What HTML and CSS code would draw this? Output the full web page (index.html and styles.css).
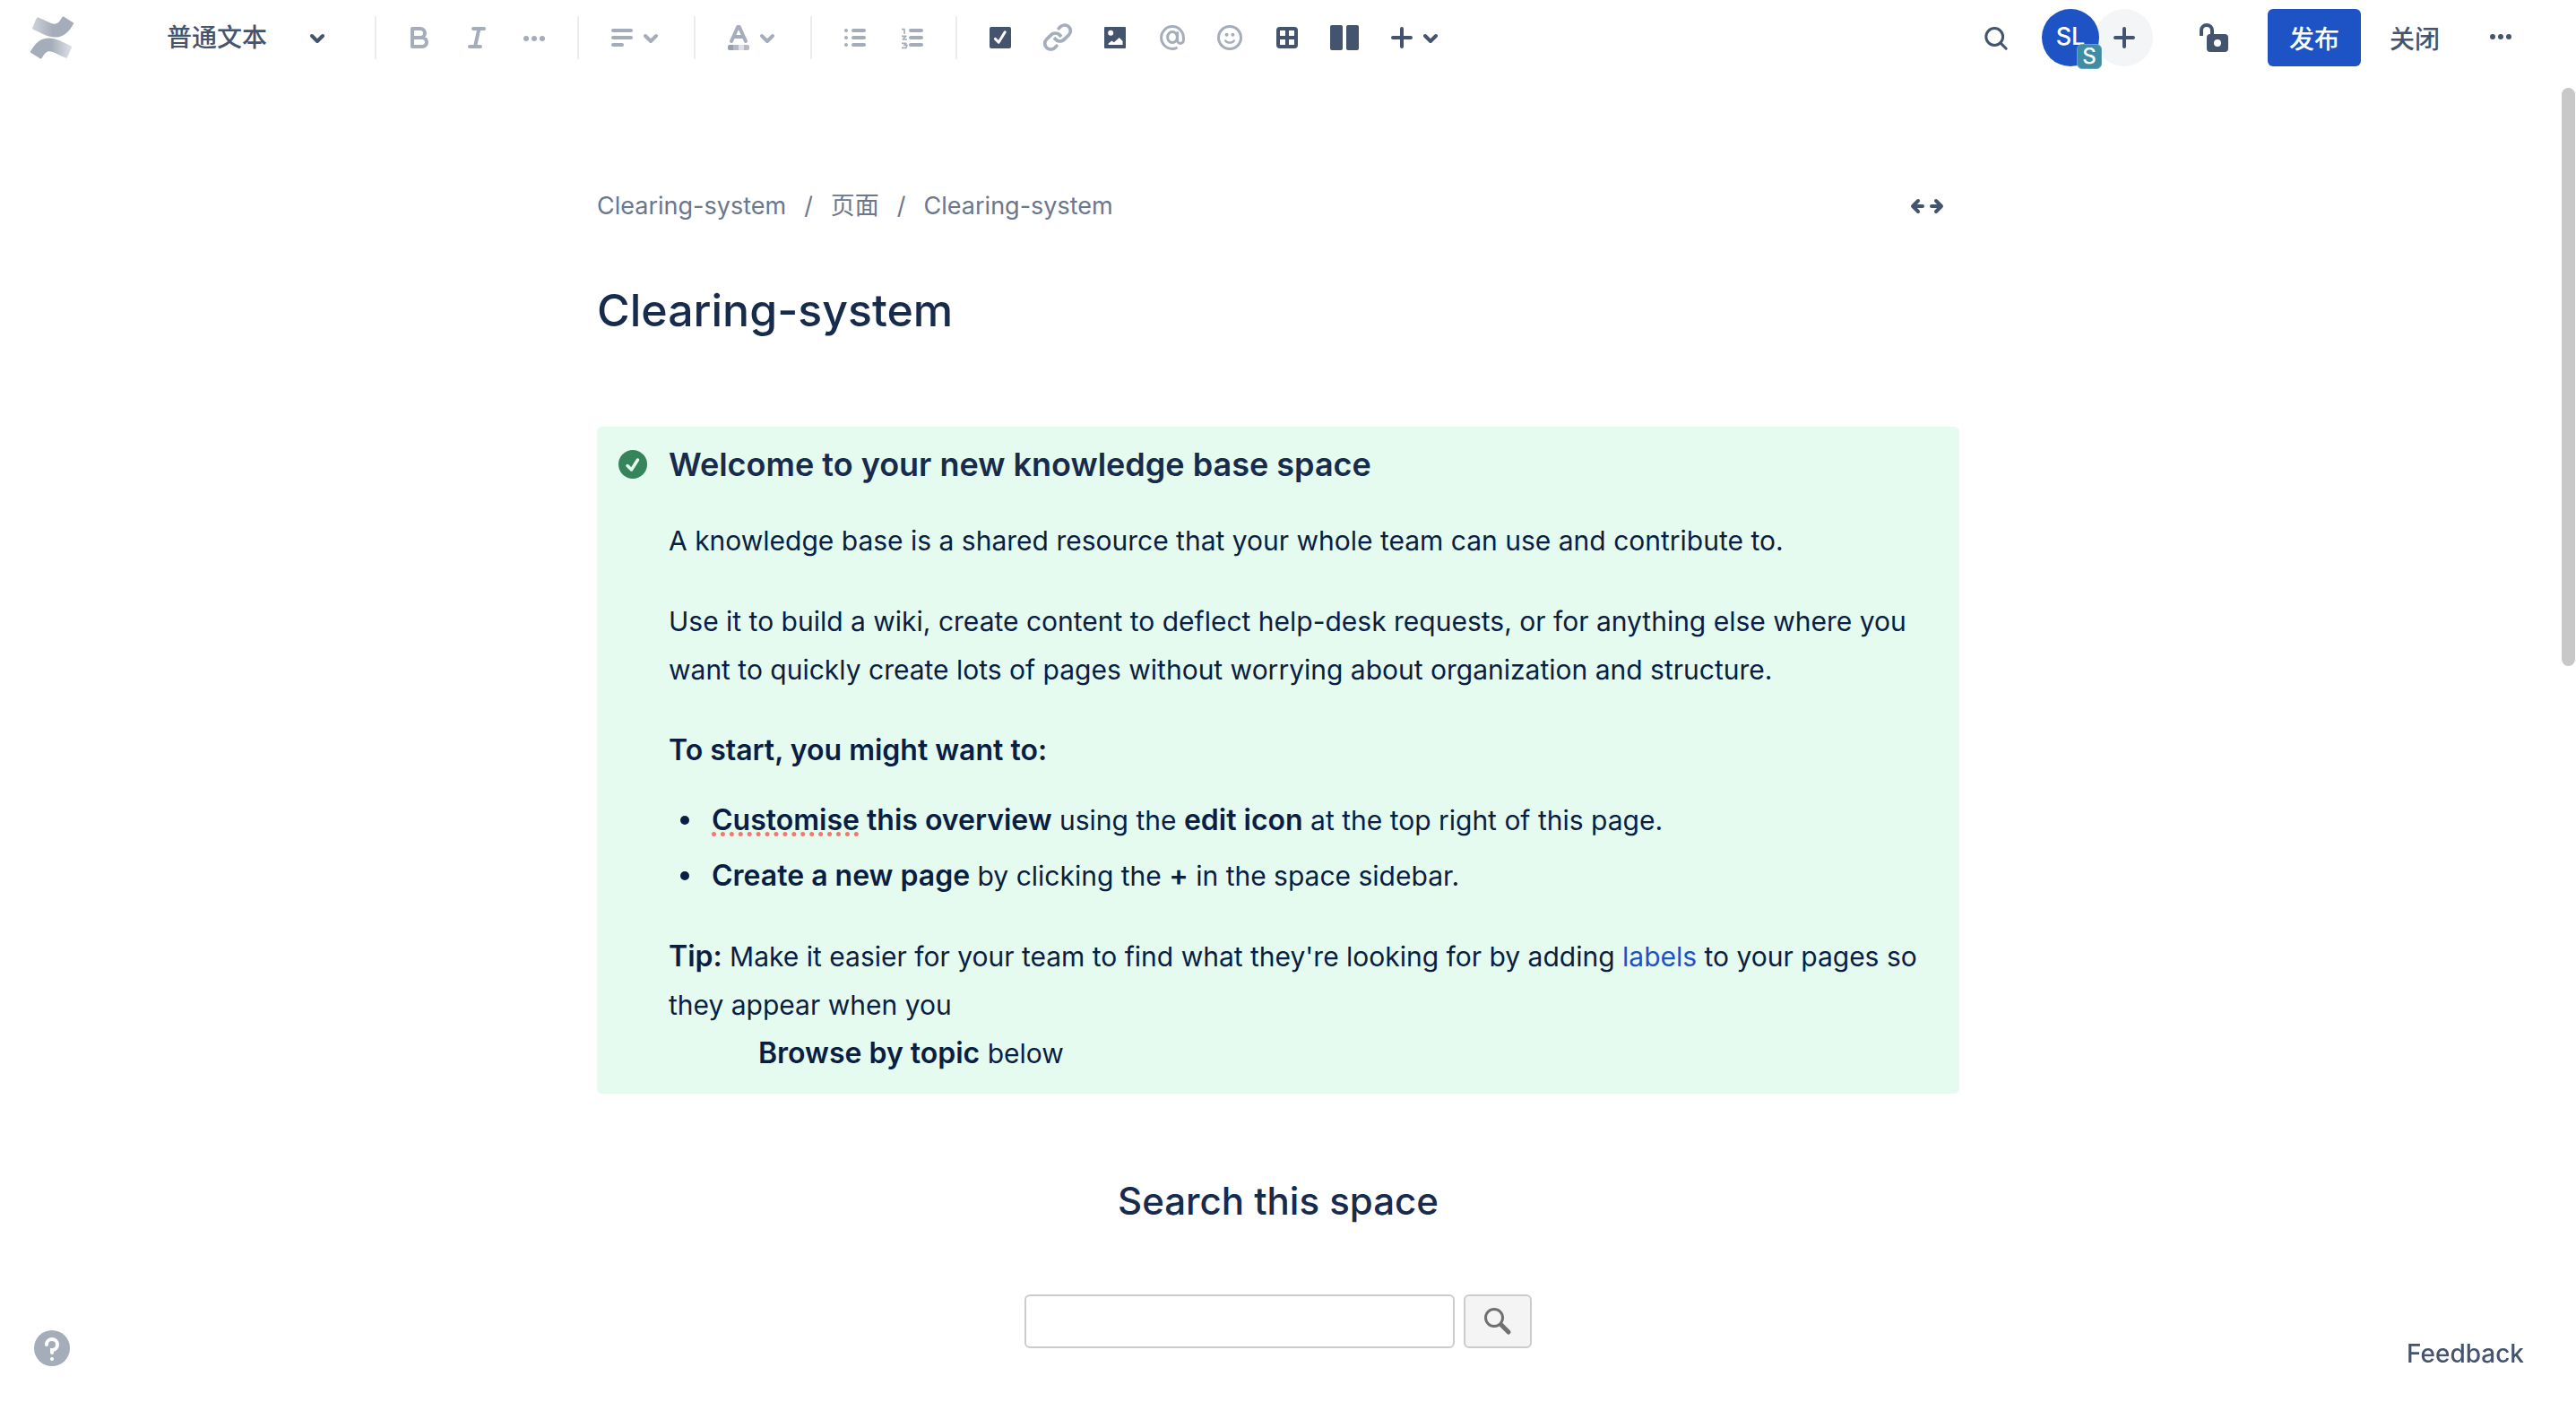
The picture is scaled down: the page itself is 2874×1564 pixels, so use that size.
FILE: index.html
```html
<!DOCTYPE html>
<html lang="zh">
<head>
<meta charset="utf-8">
<title>Clearing-system</title>
<link rel="stylesheet" href="styles.css">
</head>
<body>
<header class="toolbar">
  <a class="logo" href="#" aria-label="Confluence">
    <svg viewBox="0 0 24 24" width="48" height="48">
      <defs>
        <linearGradient id="g1" x1="0" y1="0" x2="1" y2="0"><stop offset=".5" stop-color="#a5adba"/><stop offset="1" stop-color="#dfe2e7"/></linearGradient>
        <linearGradient id="g2" x1="0" y1="0" x2="1" y2="0"><stop offset="0" stop-color="#cfd3da"/><stop offset=".5" stop-color="#a5adba"/></linearGradient>
      </defs>
      <path fill="url(#g1)" d="M.87 18.257c-.248.382-.53.875-.763 1.245a.764.764 0 0 0 .255 1.04l4.965 3.054a.764.764 0 0 0 1.058-.26c.199-.332.454-.763.733-1.221 1.967-3.247 3.945-2.853 7.508-1.146l4.957 2.337a.764.764 0 0 0 1.028-.382l2.364-5.346a.764.764 0 0 0-.382-1 599.851 599.851 0 0 1-4.965-2.361C10.911 10.97 5.224 11.185.87 18.257z"/>
      <path fill="url(#g2)" d="M23.131 5.743c.249-.405.531-.875.764-1.25a.764.764 0 0 0-.256-1.034L18.675.404a.764.764 0 0 0-1.058.26c-.195.335-.451.763-.734 1.225-1.966 3.246-3.945 2.85-7.508 1.146L4.437.694a.764.764 0 0 0-1.027.382L1.046 6.422a.764.764 0 0 0 .382 1c1.039.49 3.105 1.467 4.965 2.361 6.698 3.246 12.392 3.029 16.738-4.04z"/>
    </svg>
  </a>
  <div class="style-picker">
    <select aria-label="文本样式"><option>普通文本</option></select>
    <svg class="chevron" viewBox="8 0 8 24"><path class="line" d="M9 11l3 3 3-3"/></svg>
  </div>
  <div class="group muted">
    <button class="tool" aria-label="粗体"><svg class="icon" viewBox="0 0 24 24"><path class="line" d="M8 7h4.500a2.500 2.500 0 010 5H8zM8 12h5.500a2.500 2.500 0 010 5H8z"/></svg></button>
    <button class="tool" aria-label="斜体"><svg class="icon" viewBox="0 0 24 24"><path class="line" d="M10 7h6M8 17h6M13.200 7l-2.200 10"/></svg></button>
    <button class="tool" aria-label="更多格式"><svg class="icon" viewBox="0 0 24 24"><circle cx="7.500" cy="12.500" r="1.500"/><circle cx="12" cy="12.500" r="1.500"/><circle cx="16.500" cy="12.500" r="1.500"/></svg></button>
  </div>
  <div class="group muted">
    <button class="tool split" aria-label="对齐"><svg class="icon" viewBox="0 0 24 24"><path class="line" d="M7 8h10M7 12h10M7 16h5"/></svg><svg class="chevron" viewBox="8 0 8 24"><path class="line" d="M9 11l3 3 3-3"/></svg></button>
  </div>
  <div class="group muted">
    <button class="tool split" aria-label="文本颜色"><svg class="icon" viewBox="0 0 24 24"><path class="line" d="M8 14l3.600-8h.8l3.600 8M9.400 11.500h5.200"/><path fill="#97a0af" d="M7 16h2v3H7a1 1 0 01-1-1v-1a1 1 0 011-1z"/><path fill="#b3bac5" d="M9 16h3v3H9z"/><path fill="#dfe1e6" d="M12 16h3v3h-3z"/><path fill="#b3bac5" d="M15 16h2a1 1 0 011 1v1a1 1 0 01-1 1h-2z"/></svg><svg class="chevron" viewBox="8 0 8 24"><path class="line" d="M9 11l3 3 3-3"/></svg></button>
  </div>
  <div class="group muted">
    <button class="tool" aria-label="项目符号列表"><svg class="icon" viewBox="0 0 24 24"><circle cx="7" cy="8" r="1"/><circle cx="7" cy="12" r="1"/><circle cx="7" cy="16" r="1"/><path class="line" d="M11 8h6M11 12h6M11 16h6"/></svg></button>
    <button class="tool" aria-label="编号列表"><svg class="icon" viewBox="0 0 24 24"><path class="line" d="M11 8h6M11 12h6M11 16h6"/><path class="hair" d="M6 7.300h1.500V10M6 11.200h2.400L6.600 13H9M6 15.200h2.500l-1 1H9l-.500 1.500H6"/></svg></button>
  </div>
  <div class="group strong">
    <button class="tool" aria-label="操作项"><svg class="icon" viewBox="0 0 24 24"><rect x="6" y="6" width="12" height="12" rx="1"/><path class="cut" d="M9.200 12.700l1.900 1.900 3.500-5.700"/></svg></button>
    <button class="tool muted" aria-label="链接"><svg class="icon" viewBox="0 0 24 24"><g transform="translate(1.200 .5) scale(.9)"><path d="M12.856 5.457l-.937.92a1.002 1.002 0 000 1.437 1.047 1.047 0 001.463 0l.984-.966c.967-.95 2.542-1.135 3.602-.288a2.540 2.540 0 01.203 3.810l-2.903 2.852a2.646 2.646 0 01-3.696 0l-1.110-1.090L9 13.570l1.108 1.089c1.822 1.788 4.802 1.788 6.622 0l2.905-2.852a4.558 4.558 0 00-.357-6.820c-1.893-1.517-4.695-1.226-6.422.470"/><path d="M11.144 19.543l.937-.92a1.002 1.002 0 000-1.437 1.047 1.047 0 00-1.462 0l-.985.966c-.967.950-2.542 1.135-3.602.288a2.540 2.540 0 01-.203-3.810l2.903-2.852a2.646 2.646 0 013.696 0l1.110 1.090L15 11.430l-1.108-1.089c-1.822-1.788-4.802-1.788-6.622 0l-2.905 2.852a4.558 4.558 0 00.357 6.820c1.893 1.517 4.695 1.226 6.422-.470"/></g></svg></button>
    <button class="tool" aria-label="图片"><svg class="icon" viewBox="0 0 24 24"><rect x="6" y="6" width="12" height="12" rx=".5"/><circle cx="9.600" cy="9.400" r="1.500" fill="#fff"/><path fill="#fff" d="M8.300 16v-.8l1.900-1.400 1.200.8 3-2.600 1.900 2V16z"/></svg></button>
    <button class="tool muted" aria-label="提及"><svg class="icon" viewBox="0 0 24 24"><path class="thin" d="M14.800 9.200v4.300a1.700 1.700 0 003.400 0V12a6.200 6.200 0 10-6.200 6.200c.900 0 1.500-.1 2.200-.4"/><ellipse class="thin" cx="12" cy="11.800" rx="2.700" ry="3"/></svg></button>
    <button class="tool muted" aria-label="表情"><svg class="icon" viewBox="0 0 24 24"><circle class="thin" cx="12" cy="12" r="6.250"/><circle cx="10.300" cy="10.400" r="1"/><circle cx="13.700" cy="10.400" r="1"/><path class="fine" d="M9.600 13.700c.9 1.500 3.900 1.500 4.800 0"/></svg></button>
    <button class="tool" aria-label="表格"><svg class="icon" viewBox="0 0 24 24"><rect x="6" y="6" width="12" height="12" rx="2"/><path fill="#fff" d="M8 8h3v3H8zM13 8h3v3h-3zM8 13h3v3H8zM13 13h3v3h-3z"/></svg></button>
    <button class="tool" aria-label="布局"><svg class="icon" viewBox="0 0 24 24"><rect x="4" y="5" width="7" height="14" rx="1"/><rect x="13" y="5" width="7" height="14" rx="1"/></svg></button>
    <button class="tool split" aria-label="插入"><svg class="icon" viewBox="0 0 24 24"><path class="line" d="M12 7v10M7 12h10"/></svg><svg class="chevron" viewBox="8 0 8 24"><path class="line" d="M9 11l3 3 3-3"/></svg></button>
  </div>
  <div class="actions strong">
    <button class="tool" aria-label="搜索"><svg class="icon" viewBox="0 0 24 24"><circle class="thin" cx="10.600" cy="11.500" r="4.700"/><path class="thin" d="M14.200 15.200l2.900 2.900"/></svg></button>
    <div class="people">
      <button class="avatar">SL<span class="badge">S</span></button>
      <button class="invite" aria-label="邀请"><svg class="icon" viewBox="0 0 24 24"><path class="line" d="M12 7v10M7 12h10"/></svg></button>
    </div>
    <button class="tool lock" aria-label="限制"><svg class="icon" viewBox="0 0 24 24"><path class="line butt" d="M5 11V8a3 3 0 016 0v3"/><path fill-rule="evenodd" d="M10 10h8a2 2 0 012 2v6a2 2 0 01-2 2h-8a2 2 0 01-2-2v-6a2 2 0 012-2zm4 3a2 2 0 100 4 2 2 0 000-4z"/></svg></button>
    <button class="text-button primary">发布</button>
    <button class="text-button">关闭</button>
    <button class="tool more" aria-label="更多"><svg class="icon" viewBox="0 0 24 24"><circle cx="7.500" cy="11.500" r="1.500"/><circle cx="12" cy="11.500" r="1.500"/><circle cx="16.500" cy="11.500" r="1.500"/></svg></button>
  </div>
</header>

<main class="page">
  <article class="content">
    <div class="crumb-row">
      <nav class="crumbs" aria-label="路径"><a href="#">Clearing-system</a><span>/</span><a href="#">页面</a><span>/</span><a href="#">Clearing-system</a></nav>
      <button class="width-toggle" aria-label="宽度"><svg class="icon" viewBox="0 0 24 24"><path class="line" d="M9.500 12H4M7 9l-3 3 3 3M14.500 12H20M17 9l3 3-3 3"/></svg></button>
    </div>
    <h1 class="title">Clearing-system</h1>

    <section class="panel">
      <svg class="panel-icon" viewBox="0 0 32 32"><circle cx="16" cy="16" r="16" fill="#36845a"/><path d="M10 17.500l4.500 4.500 7-11" fill="none" stroke="#e3fcef" stroke-width="3.500" stroke-linecap="round" stroke-linejoin="round"/></svg>
      <div class="panel-body">
        <h3>Welcome to your new knowledge base space</h3>
        <p>A knowledge base is a shared resource that your whole team can use and contribute to.</p>
        <p>Use it to build a wiki, create content to deflect help-desk requests, or for anything else where you want to quickly create lots of pages without worrying about organization and structure.</p>
        <p><strong>To start, you might want to:</strong></p>
        <ul>
          <li><strong><span class="misspelt">Customise</span> this overview</strong> using the <strong>edit icon</strong> at the top right of this page.</li>
          <li><strong>Create a new page</strong> by clicking the <strong>+</strong> in the space sidebar.</li>
        </ul>
        <p><strong>Tip:</strong> Make it easier for your team to find what they're looking for by adding <a href="#">labels</a> to your pages so they appear when you<span class="indented"><strong>Browse by topic</strong> below</span></p>
      </div>
    </section>

    <h2 class="search-title">Search this space</h2>
    <form class="search">
      <input type="text" aria-label="Search this space">
      <button type="button" aria-label="Search"><svg viewBox="0 0 32 32" width="32" height="32"><circle cx="12" cy="12" r="9.500" fill="none" stroke="#707070" stroke-width="3"/><path d="M20 20l8 8" stroke="#707070" stroke-width="5" stroke-linecap="round"/></svg></button>
    </form>
  </article>
</main>

<div class="scroll-thumb"></div>
<button class="help" aria-label="帮助"><svg viewBox="0 0 40 40" width="40" height="40"><circle cx="20" cy="20" r="20" fill="#a5adba"/><path d="M14 16a6 6 0 116 6v3" fill="none" stroke="#fff" stroke-width="4" stroke-linecap="round"/><circle cx="20" cy="32" r="2" fill="#fff"/></svg></button>
<button class="feedback">Feedback</button>
</body>
</html>
```
FILE: styles.css
```css
* { box-sizing: border-box; }

body {
  margin: 0;
  min-height: 100vh;
  background: #fff;
  color: #091e42;
  font-family: Inter, "Noto Sans CJK SC", sans-serif;
  font-size: 30px;
  line-height: 54px;
}

button, select, input { font-family: inherit; }
button { padding: 0; border: 0; background: none; color: inherit; cursor: pointer; }
a { color: #1d53c5; text-decoration: none; }

.toolbar {
  display: flex;
  align-items: center;
  height: 84px;
  padding: 0 48px 0 34px;
}
.logo { display: flex; margin-right: 104px; }

.style-picker { display: flex; align-items: center; margin-right: 40px; color: #44546f; }
.style-picker select {
  appearance: none;
  width: 176px;
  height: 64px;
  margin-right: -16px;
  padding: 0;
  border: 0;
  background: none;
  color: inherit;
  font-size: 28px;
  font-weight: 500;
}

.icon { display: block; width: 48px; height: 48px; fill: currentColor; }
.chevron { display: block; width: 16px; height: 48px; }
.line, .thin, .fine, .hair, .cut {
  fill: none;
  stroke: currentColor;
  stroke-width: 2;
  stroke-linecap: round;
  stroke-linejoin: round;
}
.thin { stroke-width: 1.5; }
.fine { stroke-width: 1.2; }
.hair { stroke-width: 0.8; stroke-linecap: butt; }
.cut { stroke: #fff; stroke-width: 1.5; }
.butt { stroke-linecap: butt; }

.group { display: flex; align-items: center; }
.group::before { content: ""; width: 2px; height: 48px; margin: 0 16px; background: #ebecf0; }
.muted { color: #a5adba; }
.strong { color: #44546f; }
.tool { display: flex; flex: none; align-items: center; justify-content: center; width: 64px; height: 64px; }
.strong .tool.muted { color: #a5adba; }
.split { justify-content: flex-start; width: 96px; padding-left: 8px; }

.actions { display: flex; align-items: center; gap: 8px; margin-left: auto; }
.people { display: flex; margin: 0 28px 0 10px; }
.avatar, .invite { width: 64px; height: 64px; border-radius: 50%; }
.avatar { position: relative; z-index: 1; padding-bottom: 4px; background: #1d53c5; color: #fff; font-size: 27px; font-weight: 500; }
.badge {
  position: absolute;
  right: -3px;
  bottom: -3px;
  width: 28px;
  height: 28px;
  border: 1px solid #6aa5b5;
  border-radius: 6px;
  background: #3f8ca3;
  font-size: 24px;
  line-height: 26px;
}
.invite { display: flex; align-items: center; justify-content: center; margin-left: -4px; background: #f4f5f7; }
.lock { margin-right: 20px; }
.text-button { width: 104px; height: 64px; border-radius: 6px; font-size: 28px; font-weight: 500; }
.primary { background: #1d53c5; color: #fff; }
.more { width: 72px; }

.page { padding: 114px 22px 60px 0; }
.content { max-width: 1520px; margin: 0 auto; }

.crumb-row { display: flex; align-items: center; justify-content: space-between; height: 64px; }
.crumbs { display: flex; gap: 20px; color: #6b778c; font-size: 27px; }
.crumbs a { color: inherit; }
.width-toggle { margin-right: 12px; color: #44546f; }

.title { margin: 48px 0 94px; color: #172b4d; font-size: 50px; font-weight: 500; line-height: 72px; }

.panel {
  display: flex;
  align-items: flex-start;
  gap: 24px;
  padding: 16px 24px 18px;
  border-radius: 6px;
  background: #e5fbf0;
}
.panel-icon { flex: none; width: 32px; height: 32px; margin-top: 10px; }
.panel-body { flex: 1; }
.panel h3 { margin: 0 0 32px; color: #172b4d; font-size: 36px; font-weight: 600; line-height: 52px; }
.panel p { margin: 0; }
.panel p + p { margin-top: 36px; }
.panel strong { font-size: 32px; font-weight: 600; line-height: 1; }
.panel ul { display: grid; gap: 8px; margin: 24px 0 36px; padding-left: 48px; list-style: none; }
.panel li { position: relative; }
.panel li::before {
  content: "";
  position: absolute;
  top: 22px;
  left: -35px;
  width: 10px;
  height: 10px;
  border-radius: 50%;
  background: currentColor;
}
.misspelt {
  text-decoration: underline dotted #f0796c 5px;
  text-underline-offset: 2px;
  text-decoration-skip-ink: none;
}
.indented { display: block; padding-left: 100px; }

.search-title { margin: 88px 0 72px; color: #172b4d; font-size: 42px; font-weight: 500; line-height: 64px; text-align: center; }
.search { display: flex; justify-content: center; gap: 10px; }
.search input { width: 480px; height: 60px; padding: 0 16px; border: 2px solid #ccc; border-radius: 6px; font-size: 28px; }
.search button { display: flex; align-items: center; justify-content: center; width: 76px; height: 60px; border: 2px solid #ccc; border-radius: 6px; background: #f4f4f4; }

.scroll-thumb { position: fixed; top: 98px; right: 1px; width: 15px; height: 645px; border-radius: 8px; background: #c8c8c8; }
.help { position: fixed; left: 38px; bottom: 40px; }
.help svg { display: block; }
.feedback { position: fixed; right: 58px; bottom: 36px; color: #44546f; font-size: 28px; font-weight: 500; line-height: 36px; }
```
